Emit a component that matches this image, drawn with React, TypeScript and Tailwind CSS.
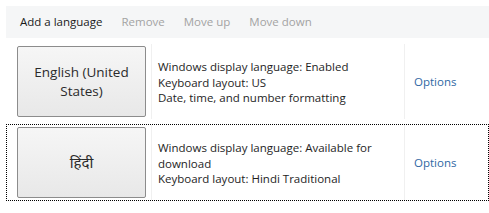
import React from 'react';

interface LanguageRow {
  name: string[];
  details: string[];
  focused?: boolean;
  large?: boolean;
}

const rows: LanguageRow[] = [
  {
    name: ['English (United', 'States)'],
    details: [
      'Windows display language: Enabled',
      'Keyboard layout: US',
      'Date, time, and number formatting',
    ],
  },
  {
    name: ['हिंदी'],
    details: [
      'Windows display language: Available for download',
      'Keyboard layout: Hindi Traditional',
    ],
    focused: true,
    large: true,
  },
];

const font = { fontFamily: '"Open Sans", "Noto Sans", "Noto Sans Devanagari", sans-serif' };

const Row: React.FC<{ row: LanguageRow }> = ({ row }) => (
  <div
    className={
      'flex h-[77px] mb-[4px] ' +
      (row.focused ? 'border border-dotted border-black' : 'border border-transparent')
    }
  >
    <div className="w-[145px] shrink-0 border-r border-[#f0f0f0] pl-[10px] pt-[2px]">
      <div
        className={
          'w-[129px] h-[71px] border border-[#8c8c8c] rounded-[2px] bg-gradient-to-b from-[#f6f6f6] to-[#e8e8e8] flex flex-col items-center justify-center leading-[19px] text-[#2a2a2a] ' +
          (row.large ? 'text-[15px]' : 'text-[13.5px]')
        }
      >
        {row.name.map((l) => (
          <span key={l}>{l}</span>
        ))}
      </div>
    </div>
    <div className="w-[253px] shrink-0 border-r border-[#f0f0f0] pl-[6px] pr-[10px] pt-[2px] flex flex-col justify-center text-[11.5px] leading-[15.5px] text-[#1e1e1e]">
      {row.details.map((l) => (
        <span key={l}>{l}</span>
      ))}
    </div>
    <div className="flex-1 pl-[9px] flex items-center text-[11.5px] text-[#2f68a3]">Options</div>
  </div>
);

export default function App() {
  return (
    <div className="w-[489px] h-[213px] bg-white overflow-hidden" style={font}>
      <div className="pt-[6px] pl-[6px]">
        <div className="h-[32px] bg-[#f5f6f7] flex items-center pl-[14px] gap-[19px] text-[11.5px]">
          <span className="text-[#1a1a1a]">Add a language</span>
          <span className="text-[#a3a3a3]">Remove</span>
          <span className="text-[#a3a3a3]">Move up</span>
          <span className="text-[#a3a3a3]">Move down</span>
        </div>
      </div>
      <div className="pt-[5px] pl-[6px]">
        {rows.map((r, i) => (
          <Row key={i} row={r} />
        ))}
      </div>
    </div>
  );
}
